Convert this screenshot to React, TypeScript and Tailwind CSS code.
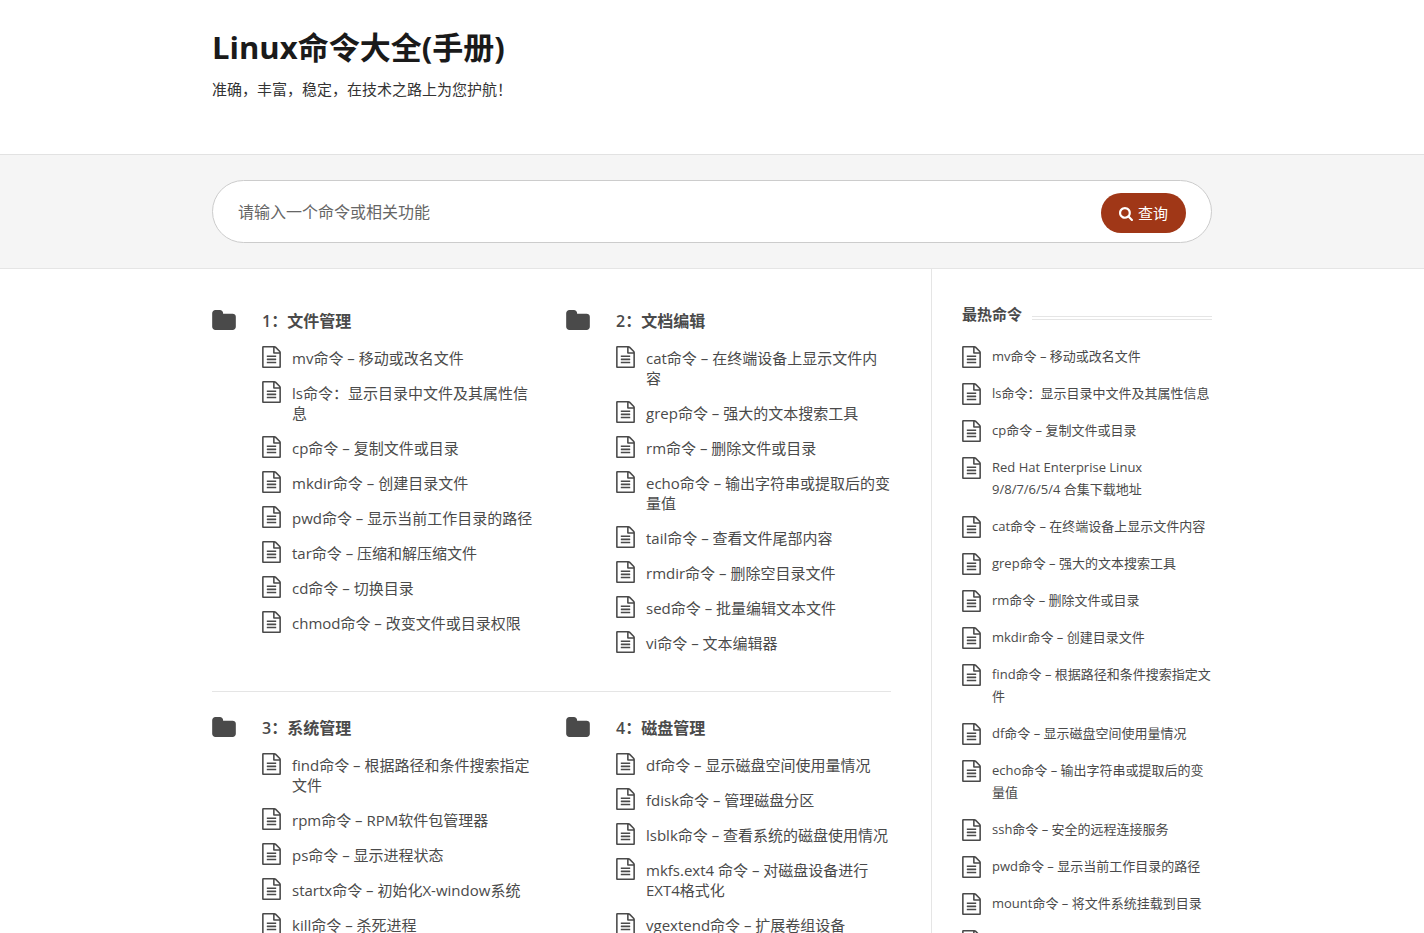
type IconProps = { className?: string }

type Category = {
  title: string
  items: string[]
}

const categories: Category[] = [
  {
    title: '1：文件管理',
    items: [
      'mv命令 – 移动或改名文件',
      'ls命令：显示目录中文件及其属性信息',
      'cp命令 – 复制文件或目录',
      'mkdir命令 – 创建目录文件',
      'pwd命令 – 显示当前工作目录的路径',
      'tar命令 – 压缩和解压缩文件',
      'cd命令 – 切换目录',
      'chmod命令 – 改变文件或目录权限',
    ],
  },
  {
    title: '2：文档编辑',
    items: [
      'cat命令 – 在终端设备上显示文件内容',
      'grep命令 – 强大的文本搜索工具',
      'rm命令 – 删除文件或目录',
      'echo命令 – 输出字符串或提取后的变量值',
      'tail命令 – 查看文件尾部内容',
      'rmdir命令 – 删除空目录文件',
      'sed命令 – 批量编辑文本文件',
      'vi命令 – 文本编辑器',
    ],
  },
  {
    title: '3：系统管理',
    items: [
      'find命令 – 根据路径和条件搜索指定文件',
      'rpm命令 – RPM软件包管理器',
      'ps命令 – 显示进程状态',
      'startx命令 – 初始化X-window系统',
      'kill命令 – 杀死进程',
    ],
  },
  {
    title: '4：磁盘管理',
    items: [
      'df命令 – 显示磁盘空间使用量情况',
      'fdisk命令 – 管理磁盘分区',
      'lsblk命令 – 查看系统的磁盘使用情况',
      'mkfs.ext4 命令 – 对磁盘设备进行EXT4格式化',
      'vgextend命令 – 扩展卷组设备',
    ],
  },
]

const hotCommands = [
  'mv命令 – 移动或改名文件',
  'ls命令：显示目录中文件及其属性信息',
  'cp命令 – 复制文件或目录',
  'Red Hat Enterprise Linux 9/8/7/6/5/4 合集下载地址',
  'cat命令 – 在终端设备上显示文件内容',
  'grep命令 – 强大的文本搜索工具',
  'rm命令 – 删除文件或目录',
  'mkdir命令 – 创建目录文件',
  'find命令 – 根据路径和条件搜索指定文件',
  'df命令 – 显示磁盘空间使用量情况',
  'echo命令 – 输出字符串或提取后的变量值',
  'ssh命令 – 安全的远程连接服务',
  'pwd命令 – 显示当前工作目录的路径',
  'mount命令 – 将文件系统挂载到目录',
  'tar命令 – 压缩和解压缩文件',
]

function FolderIcon({ className }: IconProps) {
  return (
    <svg viewBox="0 128 1664 1408" fill="currentColor" className={className} aria-hidden="true">
      <path d="M1664 608v704q0 92-66 158t-158 66h-1216q-92 0-158-66t-66-158v-960q0-92 66-158t158-66h320q92 0 158 66t66 158v32h672q92 0 158 66t66 158z" />
    </svg>
  )
}

function FileIcon({ className }: IconProps) {
  return (
    <svg viewBox="0 0 1536 1792" fill="currentColor" className={className} aria-hidden="true">
      <path d="M1468 380q28 28 48 76t20 88v1152q0 40-28 68t-68 28h-1344q-40 0-68-28t-28-68v-1600q0-40 28-68t68-28h896q40 0 88 20t76 48zm-444-244v376h376q-10-29-22-41l-313-313q-12-12-41-22zm384 1528v-1024h-416q-40 0-68-28t-28-68v-416h-768v1536h1280zm-1024-864q0-14 9-23t23-9h704q14 0 23 9t9 23v64q0 14-9 23t-23 9h-704q-14 0-23-9t-9-23v-64zm736 224q14 0 23 9t9 23v64q0 14-9 23t-23 9h-704q-14 0-23-9t-9-23v-64q0-14 9-23t23-9h704zm0 256q14 0 23 9t9 23v64q0 14-9 23t-23 9h-704q-14 0-23-9t-9-23v-64q0-14 9-23t23-9h704z" />
    </svg>
  )
}

function SearchIcon({ className }: IconProps) {
  return (
    <svg viewBox="0 0 1664 1664" fill="currentColor" className={className} aria-hidden="true">
      <path d="M1152 704q0-185-131.5-316.5t-316.5-131.5-316.5 131.5-131.5 316.5 131.5 316.5 316.5 131.5 316.5-131.5 131.5-316.5zm512 832q0 52-38 90t-90 38q-54 0-90-38l-343-342q-179 124-399 124-143 0-273.5-55.5t-225-150-150-225-55.5-273.5 55.5-273.5 150-225 225-150 273.5-55.5 273.5 55.5 225 150 150 225 55.5 273.5q0 220-124 399l343 343q37 37 37 90z" />
    </svg>
  )
}

function CategoryBlock({ title, items }: Category) {
  return (
    <section className="flex gap-[26px]">
      <FolderIcon className="w-6 h-5 -mt-px shrink-0" />
      <div className="min-w-0 flex-1">
        <h2 className="text-base leading-5 font-semibold">
          <a href="#">{title}</a>
        </h2>
        <ul className="mt-[17px] space-y-[15px]">
          {items.map((item) => (
            <li key={item} className="flex gap-[11px]">
              <FileIcon className="w-[19px] h-[22px] -mt-0.5 -mb-1 shrink-0" />
              <a href="#" className="text-[15px] leading-5">{item}</a>
            </li>
          ))}
        </ul>
      </div>
    </section>
  )
}

function Sidebar() {
  return (
    <aside className="w-[281px] shrink-0 border-l border-[#e5e5e5] pt-[35px] pl-[30px]">
      <div className="flex items-center gap-2.5">
        <h2 className="text-[15px] leading-5 font-semibold">最热命令</h2>
        <span className="mt-2 h-1 flex-1 border-y border-[#e5e5e5]" />
      </div>
      <ul className="mt-[21px] space-y-[15px]">
        {hotCommands.map((item) => (
          <li key={item} className="flex gap-[11px]">
            <FileIcon className="w-[19px] h-[22px] mt-px -mb-px shrink-0" />
            <a href="#" className="text-[13px] leading-[22px]">{item}</a>
          </li>
        ))}
      </ul>
    </aside>
  )
}

export default function App() {
  return (
    <div
      lang="zh-CN"
      className="bg-white text-[#4a4a4a] font-['Open_Sans','Noto_Sans_CJK_SC',sans-serif]"
    >
      <header className="border-b border-[#e2e2e2]">
        <div className="mx-auto max-w-[1000px] pt-[27px] pb-[55px]">
          <h1 className="text-[31px] leading-10 font-bold text-[#1a1a1a]">Linux命令大全(手册)</h1>
          <p className="mt-3 text-[15px] leading-5 text-[#333]">准确，丰富，稳定，在技术之路上为您护航！</p>
        </div>
      </header>

      <div className="border-b border-[#e5e5e5] bg-[#f5f5f5] py-[25px]">
        <form
          className="mx-auto flex h-[63px] max-w-[1000px] items-center rounded-full border border-[#ccc] bg-white px-[25px]"
          onSubmit={(e) => e.preventDefault()}
        >
          <input
            type="text"
            aria-label="请输入一个命令或相关功能"
            placeholder="请输入一个命令或相关功能"
            className="min-w-0 flex-1 text-base outline-none placeholder:text-[#666]"
          />
          <button
            type="submit"
            className="mt-0.5 flex h-10 w-[85px] items-center justify-center gap-[5px] rounded-full bg-[#a03717] pt-0.5 text-[15px] text-white"
          >
            <SearchIcon className="size-3.5" />
            查询
          </button>
        </form>
      </div>

      <div className="mx-auto flex max-w-[1000px]">
        <main className="min-w-0 flex-1 pt-[42px] pr-10">
          <div className="grid grid-cols-2 gap-x-[29px] border-b border-[#e5e5e5] pb-[38px]">
            {categories.slice(0, 2).map((c) => (
              <CategoryBlock key={c.title} {...c} />
            ))}
          </div>
          <div className="grid grid-cols-2 gap-x-[29px] pt-[26px]">
            {categories.slice(2).map((c) => (
              <CategoryBlock key={c.title} {...c} />
            ))}
          </div>
        </main>
        <Sidebar />
      </div>
    </div>
  )
}
